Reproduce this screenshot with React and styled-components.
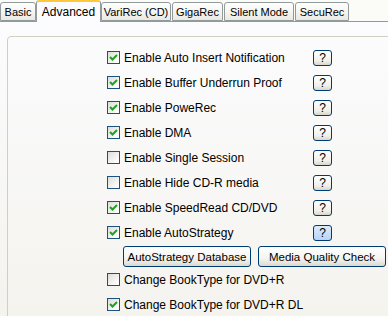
import React from "react";
import styled, { createGlobalStyle } from "styled-components";

const GlobalStyle = createGlobalStyle`
  html, body {
    margin: 0;
    padding: 0;
    width: 100%;
    height: 100%;
    overflow: hidden;
  }
  body {
    font-family: "Liberation Sans", Arial, sans-serif;
    font-size: 12px;
    color: #000;
  }
  #root {
    height: 100%;
  }
`;

const Window = styled.div`
  display: flex;
  flex-direction: column;
  height: 100%;
  background: #fbfbf8;
`;

const TabStrip = styled.div`
  display: flex;
  align-items: flex-end;
  height: 21px;
  gap: 1px;
  border-bottom: 1px solid #919b9c;
  position: relative;
  z-index: 1;
`;

const Tab = styled.div`
  box-sizing: border-box;
  width: ${(p) => p.$w}px;
  height: ${(p) => (p.$active ? 22 : 19)}px;
  margin-bottom: ${(p) => (p.$active ? -1 : 0)}px;
  margin-left: ${(p) => (p.$active ? -1 : 0)}px;
  margin-right: ${(p) => (p.$active ? -1 : 0)}px;
  display: flex;
  align-items: center;
  justify-content: center;
  padding-top: ${(p) => (p.$active ? 0 : 1)}px;
  border: 1px solid #919b9c;
  border-bottom: ${(p) => (p.$active ? "none" : "1px solid #919b9c")};
  border-top: ${(p) => (p.$active ? "2px solid #ffc83c" : "1px solid #919b9c")};
  border-radius: 3px 3px 0 0;
  background: ${(p) =>
    p.$active ? "#fcfcfe" : "linear-gradient(#ffffff, #f3f3ef 60%, #e9e8e1)"};
  white-space: nowrap;
  font-size: ${(p) => (p.$active ? 12 : 11)}px;
`;

const Panel = styled.div`
  flex: 1;
  padding: 14px 0 0 7px;
  background: linear-gradient(#fcfcfe, #f4f3ee);
  overflow: hidden;
`;

const GroupBox = styled.div`
  box-sizing: border-box;
  height: 320px;
  margin-right: -20px;
  border: 1px solid #d0d0bf;
  border-radius: 4px;
  padding: 8px 0 0 99px;
  display: flex;
  flex-direction: column;
`;

const Row = styled.div`
  display: grid;
  grid-template-columns: 206px 19px;
  align-items: center;
  height: 25px;
`;

const Label = styled.label`
  display: flex;
  align-items: center;
  gap: 4px;
  white-space: nowrap;
`;

const Box = styled.span`
  box-sizing: border-box;
  flex: none;
  width: 13px;
  height: 13px;
  border: 1px solid #1c5180;
  background: linear-gradient(135deg, #dcdcd7, #ffffff 90%);
  display: flex;
  align-items: center;
  justify-content: center;
`;

const HelpButton = styled.div`
  box-sizing: border-box;
  width: 19px;
  height: 16px;
  border: 1px solid #003c74;
  border-radius: 3px;
  background: ${(p) =>
    p.$hot
      ? "linear-gradient(#dcecfc, #b8d4f4)"
      : "linear-gradient(#ffffff, #f0f0ea 70%, #d8d5cb)"};
  display: flex;
  align-items: center;
  justify-content: center;
  font-size: 12px;
  line-height: 1;
`;

const ButtonRow = styled.div`
  display: flex;
  gap: 7px;
  padding-left: 16px;
  height: 21px;
  margin: 1px 0 0;
`;

const PushButton = styled.div`
  box-sizing: border-box;
  width: 128px;
  height: 21px;
  border: 1px solid #003c74;
  border-radius: 3px;
  background: linear-gradient(#ffffff, #f4f4f0 60%, #dcd9cf);
  display: flex;
  align-items: center;
  justify-content: center;
  white-space: nowrap;
  font-size: 11.5px;
`;

const Check = () => (
  <svg width="9" height="9" viewBox="0 0 9 9">
    <polyline
      points="1,4 3.5,6.5 8,2"
      fill="none"
      stroke="#21a121"
      strokeWidth="2"
    />
  </svg>
);

const CheckBox = ({ checked, children }) => (
  <Label>
    <Box>{checked && <Check />}</Box>
    <span>{children}</span>
  </Label>
);

const tabs = [
  ["Basic", 36],
  ["Advanced", 65, true],
  ["VariRec (CD)", 70],
  ["GigaRec", 51],
  ["Silent Mode", 70],
  ["SecuRec", 54],
];

const options = [
  ["Enable Auto Insert Notification", true],
  ["Enable Buffer Underrun Proof", true],
  ["Enable PoweRec", true],
  ["Enable DMA", true],
  ["Enable Single Session", false],
  ["Enable Hide CD-R media", false],
  ["Enable SpeedRead CD/DVD", true],
  ["Enable AutoStrategy", true, true],
];

export default function App() {
  return (
    <>
      <GlobalStyle />
      <Window>
        <TabStrip>
          {tabs.map(([name, w, active]) => (
            <Tab key={name} $w={w} $active={active}>
              {name}
            </Tab>
          ))}
        </TabStrip>
        <Panel>
          <GroupBox>
            {options.map(([text, checked, hot]) => (
              <Row key={text}>
                <CheckBox checked={checked}>{text}</CheckBox>
                <HelpButton $hot={hot}>?</HelpButton>
              </Row>
            ))}
            <ButtonRow>
              <PushButton>AutoStrategy Database</PushButton>
              <PushButton>Media Quality Check</PushButton>
            </ButtonRow>
            <Row>
              <CheckBox>Change BookType for DVD+R</CheckBox>
            </Row>
            <Row>
              <CheckBox checked>Change BookType for DVD+R DL</CheckBox>
            </Row>
          </GroupBox>
        </Panel>
      </Window>
    </>
  );
}
